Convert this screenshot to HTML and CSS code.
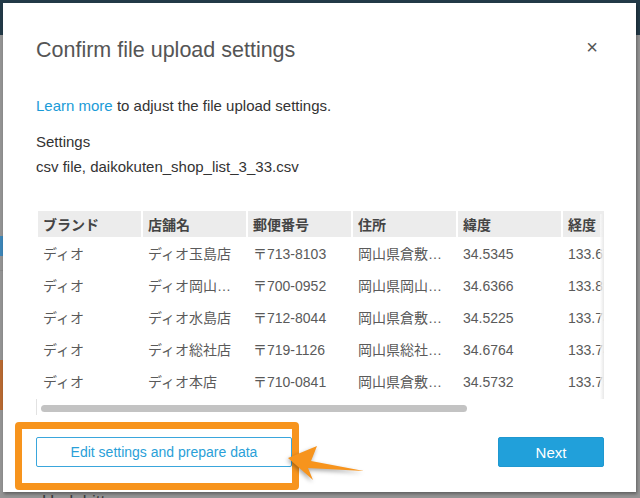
FILE: index.html
```html
<!DOCTYPE html>
<html lang="en">
<head>
  <meta charset="UTF-8" />
  <meta name="viewport" content="width=device-width, initial-scale=1.0"/>
  <title>Confirm file upload settings</title>
  <link rel="stylesheet" href="styles.css">
</head>
<body>
  <div class="page">
    <div class="modal">
      <div class="modal-head">
        <h1>Confirm file upload settings</h1>
        <span class="close">&times;</span>
      </div>

      <p class="intro"><a href="#">Learn more</a> to adjust the file upload settings.</p>
      <p class="label">Settings</p>
      <p class="file">csv file, daikokuten_shop_list_3_33.csv</p>

      <div class="preview">
        <div class="table-wrap">
          <div class="grid">
            <div class="th">ブランド</div><div class="th">店舗名</div><div class="th">郵便番号</div><div class="th">住所</div><div class="th">緯度</div><div class="th">経度</div>

            <div class="td">ディオ</div><div class="td">ディオ玉島店</div><div class="td">〒713-8103</div><div class="td">岡山県倉敷市玉島</div><div class="td">34.5345</div><div class="td">133.6712</div>
            <div class="td">ディオ</div><div class="td">ディオ岡山店舗</div><div class="td">〒700-0952</div><div class="td">岡山県岡山市北区</div><div class="td">34.6366</div><div class="td">133.8905</div>
            <div class="td">ディオ</div><div class="td">ディオ水島店</div><div class="td">〒712-8044</div><div class="td">岡山県倉敷市水島</div><div class="td">34.5225</div><div class="td">133.7401</div>
            <div class="td">ディオ</div><div class="td">ディオ総社店</div><div class="td">〒719-1126</div><div class="td">岡山県総社市総社</div><div class="td">34.6764</div><div class="td">133.7466</div>
            <div class="td">ディオ</div><div class="td">ディオ本店</div><div class="td">〒710-0841</div><div class="td">岡山県倉敷市堀南</div><div class="td">34.5732</div><div class="td">133.7598</div>
          </div>
        </div>
        <div class="scrollbar"><div class="thumb"></div></div>
      </div>

      <div class="modal-foot">
        <button class="btn-outline">Edit settings and prepare data</button>
        <button class="btn-primary">Next</button>
      </div>
    </div>

    <div class="behind">Uadabitt</div>

    <!-- annotation overlay -->
    <div class="highlight"></div>
    <svg class="arrow" width="640" height="498" viewBox="0 0 640 498">
      <polygon points="288,458 317,446 311,461 364,471 308,468 313,480" fill="#f7941d"/>
    </svg>
  </div>
</body>
</html>
```

FILE: styles.css
```css
* {
  box-sizing: border-box;
}
body {
  margin: 0;
  padding: 0;
  font-family: "Liberation Sans", "Noto Sans CJK JP", sans-serif;
  color: #333;
}
.page {
  position: relative;
  width: 640px;
  height: 498px;
  overflow: hidden;
  padding: 3px 4px 0 3px;
  background:
    linear-gradient(#8a8a8a, #8a8a8a) 0 270px / 3px 1px no-repeat,
    linear-gradient(#3d86b8, #3d86b8) 0 236px / 3px 20px no-repeat,
    linear-gradient(#b86a32, #b86a32) 0 360px / 3px 50px no-repeat,
    linear-gradient(#233a48 0 35px, #949494 35px);
}

.modal {
  position: relative;
  height: 489px;
  background: #fff;
  padding: 0 32px 0 33px;
  box-shadow: 1px 2px 3px rgba(0,0,0,0.35);
}
.modal-head {
  display: flex;
  justify-content: space-between;
  align-items: flex-start;
  padding-top: 35px;
}
.modal-head h1 {
  margin: 0;
  font-size: 21.5px;
  font-weight: normal;
  line-height: 24px;
  color: #555;
}
.close {
  font-size: 20px;
  line-height: 16px;
  margin-top: 1px;
  margin-right: 6px;
  color: #555;
}

.intro,
.label,
.file {
  margin: 0;
  font-size: 15px;
  line-height: 18px;
}
.intro {
  margin-top: 35px;
}
.intro a {
  color: #1a9bd7;
  text-decoration: none;
}
.label {
  margin-top: 18px;
}
.file {
  margin-top: 7px;
}

.preview {
  margin-top: 35px;
  margin-left: 2px;
}
.table-wrap {
  position: relative;
  width: 566px;
  overflow: hidden;
}
.table-wrap::after {
  content: "";
  position: absolute;
  top: 3px;
  right: 0;
  width: 4px;
  height: 186px;
  background: linear-gradient(90deg, rgba(255,255,255,0.6), #e8e8e8);
}
.grid {
  display: grid;
  grid-template-columns: repeat(6, 103px);
  grid-template-rows: 27px repeat(5, 32px);
  column-gap: 2px;
  row-gap: 0;
  width: 628px;
  padding-bottom: 1px;
}
.th,
.td {
  padding: 0 5px;
  font-size: 14px;
  white-space: nowrap;
  overflow: hidden;
  text-overflow: ellipsis;
}
.th {
  display: flex;
  align-items: center;
  background: #ececec;
  font-weight: bold;
  color: #444;
  margin-bottom: 1px;
}
.td {
  color: #5a5a5a;
  line-height: 32px;
}
.scrollbar {
  height: 16px;
  padding: 6px 0 0 4px;
  border-left: 1px solid #e2e2e2;
  margin-left: -2px;
}
.thumb {
  width: 426px;
  height: 7px;
  border-radius: 4px;
  background: #c3c3c3;
}

.modal-foot {
  display: flex;
  justify-content: space-between;
  margin-top: 22px;
}
.btn-outline,
.btn-primary {
  height: 30px;
  font-family: "Liberation Sans", sans-serif;
  border-radius: 2px;
  cursor: pointer;
}
.btn-outline {
  width: 256px;
  font-size: 14px;
  background: #fff;
  border: 1px solid #3aa6dc;
  color: #2a9fd8;
}
.btn-primary {
  width: 106px;
  font-size: 15px;
  background: #21a0da;
  border: 1px solid #1f98d0;
  color: #fff;
}

.behind {
  position: absolute;
  left: 42px;
  top: 492px;
  font-size: 17px;
  color: #3a3a3a;
}

.highlight {
  position: absolute;
  left: 15px;
  top: 422px;
  width: 284px;
  height: 68px;
  border: 7px solid #f7941d;
  border-radius: 4px;
}
.arrow {
  position: absolute;
  left: 0;
  top: 0;
  filter: drop-shadow(-1px 2px 2px rgba(0,0,0,0.35));
}
```
